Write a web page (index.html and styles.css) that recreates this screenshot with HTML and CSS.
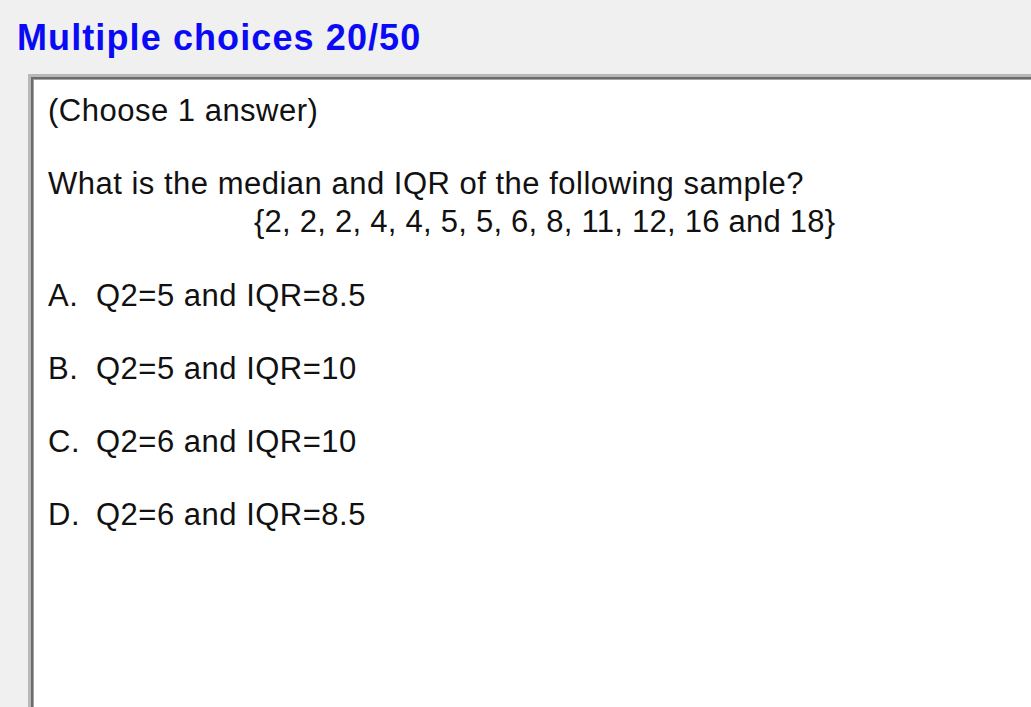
FILE: index.html
```html
<!DOCTYPE html>
<html>
<head>
<meta charset="utf-8">
<link rel="stylesheet" href="styles.css">
</head>
<body>
<div class="window">
  <h1 class="title">Multiple choices 20/50</h1>
  <div class="panel">
    <p class="line hint">(Choose 1 answer)</p>
    <div class="question">
      <p class="line">What is the median and IQR of the following sample?</p>
      <p class="line sample">{2, 2, 2, 4, 4, 5, 5, 6, 8, 11, 12, 16 and 18}</p>
    </div>
    <ul class="options">
      <li class="line option"><span class="letter">A.</span>Q2=5 and IQR=8.5</li>
      <li class="line option"><span class="letter">B.</span>Q2=5 and IQR=10</li>
      <li class="line option"><span class="letter">C.</span>Q2=6 and IQR=10</li>
      <li class="line option"><span class="letter">D.</span>Q2=6 and IQR=8.5</li>
    </ul>
  </div>
</div>
</body>
</html>
```

FILE: styles.css
```css
html, body {
  margin: 0;
  padding: 0;
  width: 1031px;
  height: 707px;
  overflow: hidden;
  background: #f0f0f0;
}

.window {
  display: flex;
  flex-direction: column;
  padding-top: 16px;
  height: 100%;
  box-sizing: border-box;
}

.title {
  margin: 0 0 14px 17px;
  font-family: "Liberation Sans", Arial, sans-serif;
  font-weight: bold;
  font-size: 36px;
  line-height: 44px;
  letter-spacing: 1.1px;
  color: #0a0af5;
}

.panel {
  flex: 1;
  margin-left: 28px;
  margin-right: -40px;
  margin-bottom: -40px;
  background: #ffffff;
  border-top: 3px solid #b8b8b8;
  border-left: 3px solid #b8b8b8;
  box-shadow: inset 2px 2px 0 #6c6c6c, inset 3px 3px 0 #a4a4a4;
  padding: 15px 0 0 17px;
  display: flex;
  flex-direction: column;
  font-family: "Liberation Sans", Arial, sans-serif;
  font-size: 31px;
  color: #111111;
}

.line {
  margin: 0;
  line-height: 38px;
  letter-spacing: 0.5px;
}

.question {
  margin-top: 35px;
}

.sample {
  padding-left: 206px;
  letter-spacing: 0.25px;
}

.options {
  list-style: none;
  margin: 36px 0 0 0;
  padding: 0;
  display: flex;
  flex-direction: column;
  gap: 35px;
}

.letter {
  display: inline-block;
  width: 48px;
}
```
